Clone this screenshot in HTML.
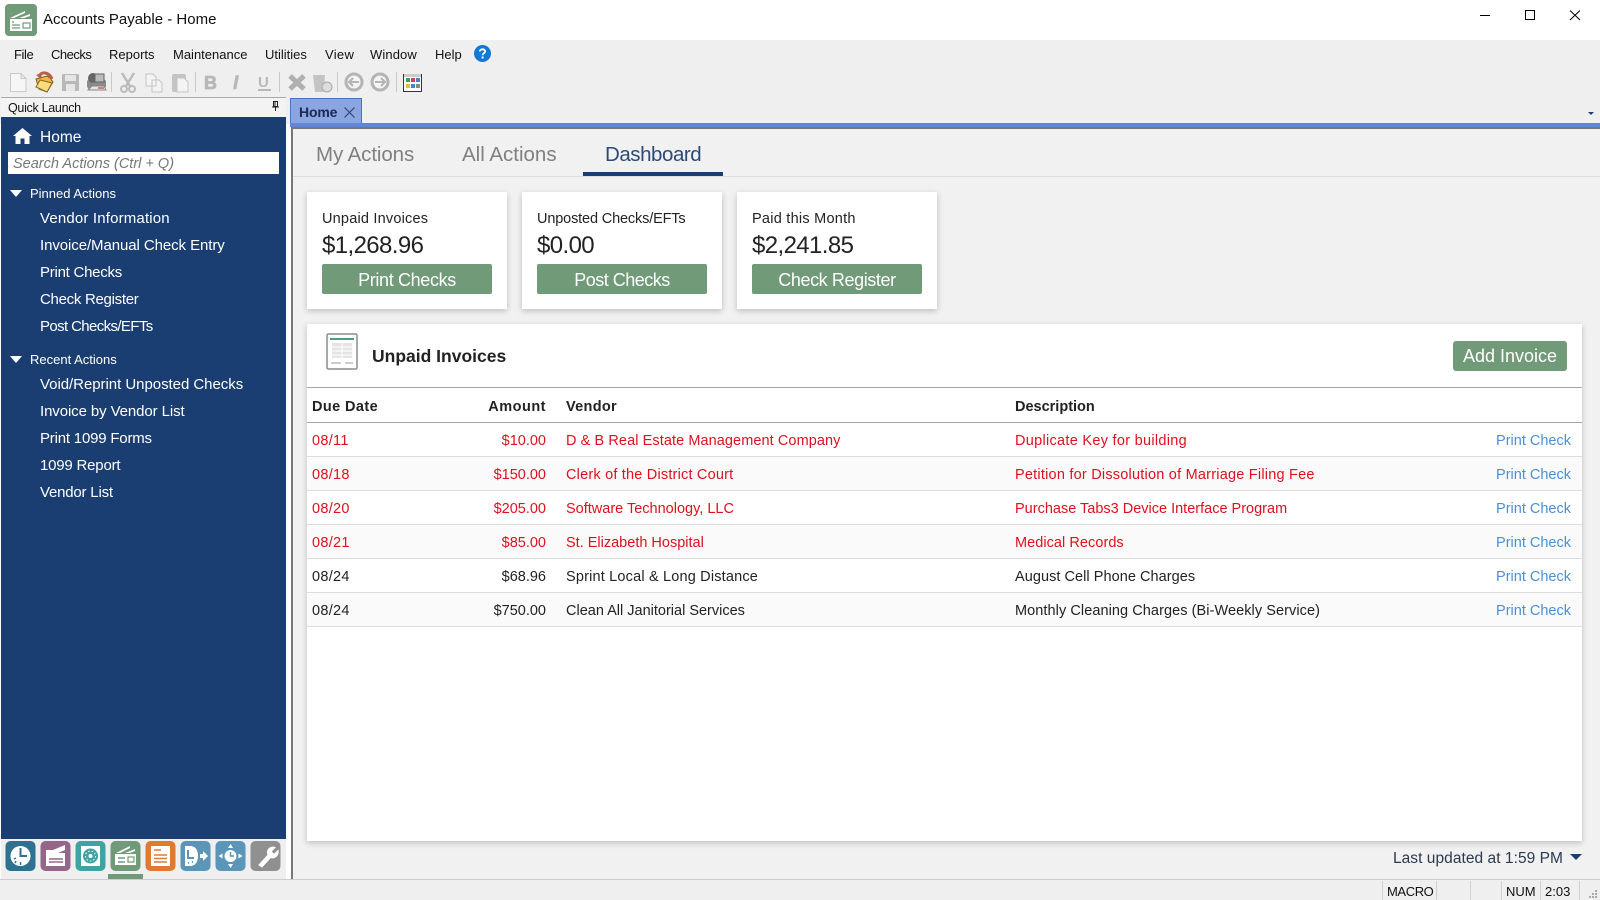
<!DOCTYPE html>
<html><head><meta charset="utf-8"><title>Accounts Payable - Home</title>
<style>
html,body{margin:0;padding:0;width:1600px;height:900px;overflow:hidden;background:#fff;font-family:"Liberation Sans",sans-serif;color:#222}
.a{position:absolute;white-space:nowrap}
.m{top:46px;font-size:13px;line-height:17px;color:#111}
.s{left:40px;font-size:15px;line-height:20px;color:#fff}
.h{left:30px;font-size:13px;line-height:18px;color:#fff}
.tri{position:absolute;left:10px;width:0;height:0;border-left:6px solid transparent;border-right:6px solid transparent;border-top:7px solid #fff}
.card{position:absolute;top:192px;width:200px;height:117px;background:#fff;box-shadow:0 2px 6px rgba(0,0,0,.22)}
.card .l{position:absolute;left:15px;top:18px;font-size:14.5px;line-height:18px;white-space:nowrap}
.card .v{position:absolute;left:15px;top:39px;font-size:24px;line-height:30px;white-space:nowrap;letter-spacing:-.6px}
.card .b{position:absolute;left:15px;top:72px;width:170px;height:30px;background:#709a78;border-radius:2px;color:#fff;font-size:18px;line-height:32px;text-align:center}
table{border-collapse:collapse;table-layout:fixed;position:absolute;left:0;top:63px;width:1275px;font-size:14.5px}
th{height:31px;padding:3px 0 0;font-weight:bold;text-align:left;border-top:1px solid #a5a5a5;border-bottom:1px solid #a5a5a5;color:#222}
td{height:31px;padding:2px 0 0;border-bottom:1px solid #ddd;white-space:nowrap}
tr.r td{color:#e0101c}
tr.z td{background:#fafafa}
td.p{color:#4a90d9!important;text-align:right;padding-right:11px}
.c1{padding-left:5px}.c2{text-align:right}.c3{padding-left:20px}
.st{top:884px;font-size:13px;line-height:16px;color:#111}
.sep{position:absolute;top:881px;width:1px;height:19px;background:#d0d0d0}
svg{position:absolute;display:block}
</style></head><body>

<!-- title bar -->
<svg style="left:5px;top:4px" width="32" height="32" viewBox="0 0 32 32"><rect width="32" height="32" rx="4" fill="#709a78"/><path d="M5 14 L20 7 L20 9 L9 14Z M14 14 L25 10 L25 12 L19 14Z" fill="#fff"/><rect x="5" y="15" width="22" height="12" fill="#fff"/><path d="M7 18h2M7 21h8M7 24h8" stroke="#709a78" stroke-width="1.2"/><rect x="18" y="19" width="7" height="5" fill="none" stroke="#709a78" stroke-width="1.2"/></svg>
<div class="a" style="left:43px;top:11px;font-size:15px;line-height:18px;color:#111">Accounts Payable - Home</div>
<svg style="left:1480px;top:10px" width="100" height="20" viewBox="0 0 100 20" fill="none" stroke="#000" stroke-width="1"><path d="M0 5.5H10"/><rect x="45.5" y="0.5" width="9" height="9"/><path d="M91 0.5L101 10M101 0.5L91 10" transform="translate(-1 0)"/></svg>

<!-- menu + toolbar + tab strip background -->
<div class="a" style="left:0;top:40px;width:1600px;height:84px;background:#efefef"></div>
<div class="a m" style="left:14px;letter-spacing:-.4px">File</div>
<div class="a m" style="left:51px;letter-spacing:-.5px">Checks</div>
<div class="a m" style="left:109px">Reports</div>
<div class="a m" style="left:173px">Maintenance</div>
<div class="a m" style="left:265px">Utilities</div>
<div class="a m" style="left:325px;letter-spacing:.3px">View</div>
<div class="a m" style="left:370px;letter-spacing:.1px">Window</div>
<div class="a m" style="left:435px">Help</div>
<svg style="left:474px;top:45px" width="17" height="17" viewBox="0 0 17 17"><circle cx="8.5" cy="8.5" r="8.5" fill="#1378d4"/><path d="M5.8 6.5C5.8 3.6 11.2 3.6 11.2 6.4C11.2 8.2 8.6 8.2 8.6 10.2" fill="none" stroke="#fff" stroke-width="1.8"/><rect x="7.6" y="11.5" width="2" height="2" fill="#fff"/></svg>

<!-- toolbar icons -->
<svg style="left:0;top:66px" width="440" height="32" viewBox="0 0 440 32">
<path d="M10.5 7.5H21L26 12.5V25.5H10.5Z M21 7.5V12.5H26" fill="#f6f6f6" stroke="#c9c9c9"/>
<path d="M36 13L47 10L50 12L53 16L47 26L39 23Z" fill="#f0b840" stroke="#7a5a20"/><path d="M40 14L52 17L47 26L36 21Z" fill="#f8dc80" stroke="#8a6a20"/><path d="M39 10C42 5 49 6 52 13" fill="none" stroke="#b86048" stroke-width="3"/><path d="M36 9L42 7L41 13Z" fill="#b86048"/>
<rect x="62" y="8" width="17" height="17" rx="1" fill="#b8b8b8"/><rect x="65" y="9" width="11" height="6" fill="#e6e6e6"/><rect x="66" y="18" width="9" height="7" fill="#e6e6e6"/>
<rect x="87" y="13" width="19" height="10" rx="3" fill="#8a8a8a"/><circle cx="93" cy="12" r="5" fill="#666"/><rect x="95" y="8" width="9" height="8" fill="#bbb" stroke="#666"/><path d="M88 24H106L104 20H92Z" fill="#e4e4e4" stroke="#888"/><rect x="98" y="21" width="6" height="2" fill="#d08080"/>
<path d="M111.5 6v20" stroke="#c8c8c8"/>
<path d="M122 7L130 20M134 7L126 20" stroke="#bbb" stroke-width="2.5"/><circle cx="124" cy="23" r="3" fill="none" stroke="#bbb" stroke-width="2"/><circle cx="132" cy="23" r="3" fill="none" stroke="#bbb" stroke-width="2"/>
<path d="M146 8H153L156 11V20H146Z M152 14H159L162 17V26H152Z" fill="#f4f4f4" stroke="#c4c4c4"/>
<rect x="172" y="8" width="14" height="18" rx="2" fill="#c4c4c4"/><path d="M177 12H184L188 16V26H177Z" fill="#f4f4f4" stroke="#c4c4c4"/>
<path d="M195.5 6v20" stroke="#c8c8c8"/>
<text x="204" y="23" font-family="Liberation Sans" font-weight="bold" font-size="18" fill="#b8b8b8" stroke="#b8b8b8" stroke-width=".8">B</text>
<text x="233" y="23" font-family="Liberation Sans" font-weight="bold" font-style="italic" font-size="19" fill="#b8b8b8" stroke="#b8b8b8" stroke-width=".6">I</text>
<text x="258" y="21" font-family="Liberation Sans" font-weight="bold" font-size="15" fill="#b8b8b8">U</text><rect x="258" y="23" width="13" height="2" fill="#b8b8b8"/>
<path d="M279.5 6v20" stroke="#c8c8c8"/>
<path d="M290 10L304 23M304 10L290 23" stroke="#b0b0b0" stroke-width="5"/>
<path d="M313 9H325L324 26H315Z" fill="#c4c4c4"/><circle cx="327" cy="21" r="5" fill="#ddd" stroke="#aaa"/>
<path d="M337.5 6v20" stroke="#c8c8c8"/>
<circle cx="354" cy="16" r="8" fill="#f4f4f4" stroke="#b4b4b4" stroke-width="3"/><path d="M359 16H350M353 12L349 16L353 20" fill="none" stroke="#b4b4b4" stroke-width="2"/>
<circle cx="380" cy="16" r="8" fill="#f4f4f4" stroke="#b4b4b4" stroke-width="3"/><path d="M375 16H384M381 12L385 16L381 20" fill="none" stroke="#b4b4b4" stroke-width="2"/>
<path d="M396.5 6v20" stroke="#c8c8c8"/>
<rect x="403.5" y="8.5" width="18" height="17" fill="#fff" stroke="#333"/><rect x="404" y="8" width="17" height="3" fill="#ccc"/>
<rect x="406" y="12" width="4" height="4" fill="#38a060"/><rect x="411" y="12" width="4" height="4" fill="#d04050"/><rect x="416" y="12" width="4" height="4" fill="#4a80d0"/>
<rect x="406" y="18" width="4" height="4" fill="#e0c040"/><rect x="411" y="18" width="4" height="4" fill="#4a80d0"/><rect x="416" y="18" width="4" height="4" fill="#888"/>
</svg>

<!-- sidebar -->
<div class="a" style="left:1px;top:97px;width:285px;height:20px;background:#f3f3f3;border-top:1px solid #aaa;box-sizing:border-box"></div>
<div class="a" style="left:8px;top:100px;font-size:12.5px;line-height:16px;color:#111;letter-spacing:-.3px">Quick Launch</div>
<svg style="left:272px;top:101px" width="7" height="10" viewBox="0 0 7 10"><path d="M1.5 .5h4v5h-4zM0 6h7M3.5 6v4M3 1v4" fill="none" stroke="#222"/></svg>
<div class="a" style="left:1px;top:117px;width:285px;height:722px;background:#1a3e72"></div>
<svg style="left:13px;top:128px" width="19" height="16" viewBox="0 0 19 16"><path d="M9.5 0L19 8H16.5V16H11.5V10.5H7.5V16H2.5V8H0Z" fill="#fff"/></svg>
<div class="a" style="left:40px;top:128px;font-size:15.5px;line-height:19px;color:#fff">Home</div>
<div class="a" style="left:8px;top:152px;width:271px;height:22px;background:#fff"></div>
<div class="a" style="left:13px;top:156px;font-size:14.5px;line-height:17px;font-style:italic;color:#777">Search Actions (Ctrl + Q)</div>
<div class="tri" style="top:190px"></div><div class="a h" style="top:185px">Pinned Actions</div>
<div class="a s" style="top:209px;letter-spacing:.17px">Vendor Information</div>
<div class="a s" style="top:236px;letter-spacing:-.08px">Invoice/Manual Check Entry</div>
<div class="a s" style="top:263px;letter-spacing:-.25px">Print Checks</div>
<div class="a s" style="top:290px;letter-spacing:-.29px">Check Register</div>
<div class="a s" style="top:317px;letter-spacing:-.62px">Post Checks/EFTs</div>
<div class="tri" style="top:356px"></div><div class="a h" style="top:351px">Recent Actions</div>
<div class="a s" style="top:375px;letter-spacing:-.04px">Void/Reprint Unposted Checks</div>
<div class="a s" style="top:402px;letter-spacing:-.1px">Invoice by Vendor List</div>
<div class="a s" style="top:429px;letter-spacing:-.2px">Print 1099 Forms</div>
<div class="a s" style="top:456px;letter-spacing:-.2px">1099 Report</div>
<div class="a s" style="top:483px;letter-spacing:-.2px">Vendor List</div>

<!-- module icons -->
<div class="a" style="left:1px;top:839px;width:285px;height:41px;background:#efefef"></div>
<svg style="left:0;top:838px" width="290" height="44" viewBox="0 0 290 44">
<rect x="5.5" y="3" width="30" height="30" rx="5" fill="#2e7191"/><circle cx="20.500" cy="18" r="10" fill="#fff"/><path d="M20.500 10V18H27" fill="none" stroke="#2e7191" stroke-width="2"/><path d="M14 21l2-1M20.500 24v3M15 25l1-2" stroke="#2e7191" stroke-width="1.500"/>
<rect x="40.5" y="3" width="30" height="30" rx="5" fill="#93668a"/><path d="M46 15V12H53L65 7V12L58 15H65V28H46Z" fill="#fff"/><path d="M49 21H63M49 24H63" stroke="#93668a" stroke-width="1.500"/>
<rect x="75.5" y="3" width="30" height="30" rx="5" fill="#3fa3a3"/><rect x="81" y="8" width="19" height="20" fill="#fff"/><circle cx="90.500" cy="18" r="7.500" fill="#3fa3a3"/><circle cx="90.500" cy="18" r="2" fill="#fff"/><circle cx="90.500" cy="18" r="5" fill="none" stroke="#fff" stroke-width="1" stroke-dasharray="1.500 2"/>
<rect x="110.5" y="3" width="30" height="30" rx="5" fill="#709a78"/><path d="M116 15L130 8V10L120 15ZM125 15L135 11V13L130 15Z" fill="#fff"/><rect x="115" y="16" width="21" height="11" fill="#fff"/><path d="M118 20H125M118 24H125" stroke="#709a78" stroke-width="1.500"/><rect x="128" y="19" width="6" height="5" fill="none" stroke="#709a78" stroke-width="1.200"/>
<rect x="108" y="36" width="35" height="5" fill="#709a78"/>
<rect x="145.5" y="3" width="30" height="30" rx="5" fill="#e07a30"/><rect x="151" y="8" width="19" height="20" fill="#fff"/><path d="M154 12H161M154 17H167M154 20.500H167M154 24H167" stroke="#e07a30" stroke-width="1.500"/>
<rect x="180.5" y="3" width="30" height="30" rx="5" fill="#5b95b8"/><path d="M185 8H190C196 8 198 13 198 18C198 23 196 28 190 28H185Z" fill="#fff"/><path d="M188 12V20H194M188 25h1M192 24h1" fill="none" stroke="#5b95b8" stroke-width="2"/><path d="M200 16H203V13L208 18L203 23V20H200Z" fill="#fff"/>
<rect x="215.5" y="3" width="30" height="30" rx="5" fill="#5b95b8"/><circle cx="230.500" cy="18" r="6" fill="#fff"/><path d="M230.500 14V18H234" fill="none" stroke="#5b95b8" stroke-width="1.500"/><path d="M230.500 6L233 10H228ZM230.500 30L233 26H228ZM218.500 18L222.500 15.500V20.500ZM242.500 18L238.500 15.500V20.500Z" fill="#fff"/>
<rect x="250.5" y="3" width="30" height="30" rx="5" fill="#909090"/><path d="M259 27L268 17C266 12 270 8 275 9.500L271 13.500L274 16.500L278 12.500C279 17 275 21 270.500 19.500L262 29Z" fill="#fff" stroke="#fff"/>
</svg>

<!-- tab strip -->
<div class="a" style="left:290px;top:98px;width:72px;height:26px;box-sizing:border-box;background:#8aa5e0;border:1px solid #4a72c8;border-bottom:0"></div>
<div class="a" style="left:299px;top:104px;font-size:14px;line-height:17px;font-weight:bold;color:#1a2a50;letter-spacing:-.15px">Home</div>
<svg style="left:344px;top:107px" width="11" height="11" viewBox="0 0 11 11"><path d="M.5.5L10.5 10.5M10.5.5L.5 10.5" stroke="#34466e" stroke-width="1.200"/></svg>
<div class="a" style="left:290px;top:123px;width:1310px;height:4px;background:#5f86d8"></div>
<div class="a" style="left:1588px;top:112px;width:0;height:0;border-left:3px solid transparent;border-right:3px solid transparent;border-top:3px solid #1a3e72"></div>
<div class="a" style="left:291px;top:127px;width:1309px;height:753px;box-sizing:border-box;background:#f1f1f1;border-left:2px solid #777;border-top:2px solid #777"></div>

<!-- view tabs -->
<div class="a" style="left:316px;top:142px;font-size:20.5px;line-height:26px;color:#808080;letter-spacing:-.1px">My Actions</div>
<div class="a" style="left:462px;top:142px;font-size:20.5px;line-height:26px;color:#808080">All Actions</div>
<div class="a" style="left:605px;top:142px;font-size:20.5px;line-height:26px;color:#2a4a78;letter-spacing:-.45px">Dashboard</div>
<div class="a" style="left:293px;top:176px;width:1307px;height:1px;background:#ddd"></div>
<div class="a" style="left:583px;top:172px;width:140px;height:4px;background:#1a3e72"></div>

<!-- cards -->
<div class="card" style="left:307px"><div class="l" style="letter-spacing:.2px">Unpaid Invoices</div><div class="v">$1,268.96</div><div class="b" style="letter-spacing:-.35px">Print Checks</div></div>
<div class="card" style="left:522px"><div class="l" style="letter-spacing:-.15px">Unposted Checks/EFTs</div><div class="v">$0.00</div><div class="b" style="letter-spacing:-.5px">Post Checks</div></div>
<div class="card" style="left:737px"><div class="l" style="letter-spacing:.25px">Paid this Month</div><div class="v">$2,241.85</div><div class="b" style="letter-spacing:-.4px">Check Register</div></div>

<!-- panel -->
<div class="a" style="left:307px;top:324px;width:1275px;height:517px;background:#fff;box-shadow:0 2px 6px rgba(0,0,0,.22)">
<svg style="left:19px;top:9px" width="32" height="37" viewBox="0 0 32 37"><rect x="1" y="1" width="30" height="35" rx="1.500" fill="#fff" stroke="#8c8c8c" stroke-width="1.500"/><rect x="4" y="5" width="24" height="2" fill="#4e9e7e"/><rect x="6" y="10" width="20" height="15" fill="#e4e4e4"/><path d="M6 14H26M6 18H26M6 22H26M16 10V25" stroke="#fff"/><path d="M5 30H15M19 30H27" stroke="#999"/></svg>
<div class="a" style="left:65px;top:21px;font-size:17.5px;line-height:22px;font-weight:bold;color:#222">Unpaid Invoices</div>
<div class="a" style="left:1146px;top:17px;width:114px;height:30px;background:#709a78;border-radius:3px;color:#fff;font-size:18px;line-height:31px;text-align:center">Add Invoice</div>
<table>
<colgroup><col style="width:143px"><col style="width:96px"><col style="width:469px"><col style="width:385px"><col style="width:182px"></colgroup>
<tr><th class="c1" style="letter-spacing:.4px">Due Date</th><th class="c2" style="letter-spacing:.5px">Amount</th><th class="c3" style="letter-spacing:.3px">Vendor</th><th>Description</th><th></th></tr>
<tr class="r"><td class="c1" style="letter-spacing:.3px">08/11</td><td class="c2">$10.00</td><td class="c3" style="letter-spacing:.08px">D &amp; B Real Estate Management Company</td><td style="letter-spacing:.29px">Duplicate Key for building</td><td class="p">Print Check</td></tr>
<tr class="r z"><td class="c1" style="letter-spacing:.3px">08/18</td><td class="c2">$150.00</td><td class="c3" style="letter-spacing:.2px">Clerk of the District Court</td><td style="letter-spacing:.22px">Petition for Dissolution of Marriage Filing Fee</td><td class="p">Print Check</td></tr>
<tr class="r"><td class="c1" style="letter-spacing:.3px">08/20</td><td class="c2">$205.00</td><td class="c3">Software Technology, LLC</td><td>Purchase Tabs3 Device Interface Program</td><td class="p">Print Check</td></tr>
<tr class="r z"><td class="c1" style="letter-spacing:.3px">08/21</td><td class="c2">$85.00</td><td class="c3">St. Elizabeth Hospital</td><td style="letter-spacing:.05px">Medical Records</td><td class="p">Print Check</td></tr>
<tr><td class="c1" style="letter-spacing:.3px">08/24</td><td class="c2">$68.96</td><td class="c3" style="letter-spacing:.18px">Sprint Local &amp; Long Distance</td><td style="letter-spacing:.05px">August Cell Phone Charges</td><td class="p">Print Check</td></tr>
<tr class="z"><td class="c1" style="letter-spacing:.3px">08/24</td><td class="c2">$750.00</td><td class="c3">Clean All Janitorial Services</td><td style="letter-spacing:.07px">Monthly Cleaning Charges (Bi-Weekly Service)</td><td class="p">Print Check</td></tr>
</table>
</div>

<div class="a" style="right:37px;top:849px;font-size:15.5px;line-height:20px;color:#2a3a50;letter-spacing:.05px">Last updated at 1:59 PM</div>
<div class="a" style="left:1570px;top:854px;width:0;height:0;border-left:6px solid transparent;border-right:6px solid transparent;border-top:6px solid #1a3e72"></div>

<!-- status bar -->
<div class="a" style="left:0;top:879px;width:1600px;height:21px;background:#efefef;border-top:1px solid #ccc;box-sizing:border-box"></div>
<div class="sep" style="left:1382px"></div><div class="sep" style="left:1436px"></div><div class="sep" style="left:1470px"></div><div class="sep" style="left:1501px"></div><div class="sep" style="left:1540px"></div><div class="sep" style="left:1579px"></div>
<div class="a st" style="left:1387px;letter-spacing:-.4px">MACRO</div>
<div class="a st" style="left:1506px">NUM</div>
<div class="a st" style="left:1545px">2:03</div>
<svg style="left:1588px;top:889px" width="10" height="10" viewBox="0 0 10 10" fill="#aaa"><rect x="7" y="1" width="2" height="2"/><rect x="4" y="4" width="2" height="2"/><rect x="7" y="4" width="2" height="2"/><rect x="1" y="7" width="2" height="2"/><rect x="4" y="7" width="2" height="2"/><rect x="7" y="7" width="2" height="2"/></svg>
</body></html>
